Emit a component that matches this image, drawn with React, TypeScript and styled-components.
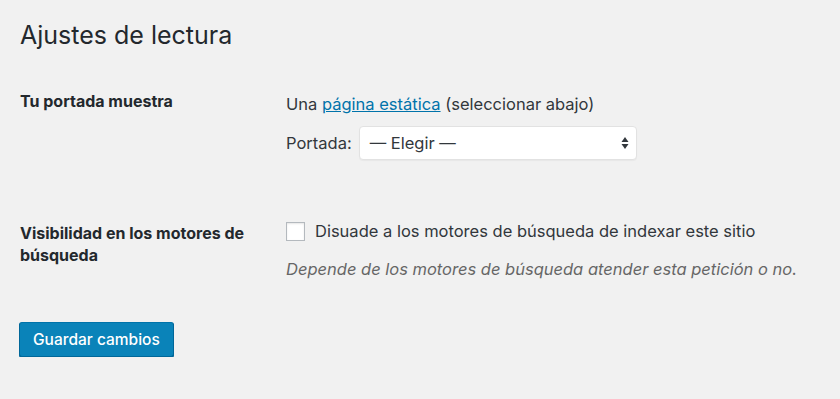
import React from 'react';
import styled, {createGlobalStyle} from 'styled-components';

const GlobalStyle = createGlobalStyle`
    html, body {
        margin: 0;
        padding: 0;
        background: #f1f1f1;
    }
    body {
        font-family: Inter, "Noto Sans", "Liberation Sans", sans-serif;
        color: #23282d;
    }
`;

const Wrap = styled.div`
    padding: 19px 20px 0 20px;
`;

const Title = styled.h1`
    margin: 0 0 39px 0;
    font-size: 25px;
    font-weight: 400;
    line-height: 32px;
    color: #23282d;
`;

const Form = styled.div`
    display: grid;
    grid-template-columns: 266px 1fr;
`;

const Label = styled.div<{$top?: number}>`
    font-size: 16px;
    font-weight: 700;
    line-height: 22px;
    padding-top: ${({$top}) => $top ?? 0}px;
    padding-right: 20px;
`;

const Field = styled.div<{$top: number; $bottom: number}>`
    font-size: 16.5px;
    line-height: 22px;
    color: #32373c;
    padding-top: ${({$top}) => $top}px;
    padding-bottom: ${({$bottom}) => $bottom}px;
`;

const Line = styled.div<{$top?: number}>`
    display: flex;
    align-items: center;
    gap: 7px;
    margin-top: ${({$top}) => $top ?? 0}px;
`;

const Link = styled.a`
    color: #0073aa;
    text-decoration: underline;
`;

const Select = styled.div`
    position: relative;
    width: 278px;
    height: 34px;
    box-sizing: border-box;
    padding: 0 10px;
    display: flex;
    align-items: center;
    background: #fff;
    border: 1px solid #e2e2e2;
    border-radius: 4px;
    box-shadow: 0 1px 1px rgba(0, 0, 0, 0.04);
    color: #32373c;
`;

const Arrows = styled.svg`
    position: absolute;
    right: 7px;
    top: 9px;
`;

const Checkbox = styled.span`
    display: inline-block;
    width: 19px;
    height: 19px;
    box-sizing: border-box;
    border: 1px solid #b4b9be;
    background: #fff;
    box-shadow: inset 0 1px 2px rgba(0, 0, 0, 0.1);
    margin-right: 3px;
`;

const Hint = styled.p`
    margin: 16px 0 0 0;
    font-style: italic;
    color: #666;
`;

const Button = styled.button`
    margin-top: 42px;
    margin-left: -1px;
    height: 35px;
    padding: 0 13px;
    font-family: inherit;
    font-size: 15.5px;
    font-weight: 500;
    color: #fff;
    background: #0a83b9;
    border: 1px solid #0073aa;
    border-color: #0073aa #006799 #006799;
    border-radius: 3px;
    box-shadow: 0 1px 0 #006799;
    cursor: pointer;
`;

export default function App() {
    return (
        <>
            <GlobalStyle />
            <Wrap>
                <Title>Ajustes de lectura</Title>
                <Form>
                    <Label>Tu portada muestra</Label>
                    <Field $top={3} $bottom={60}>
                        <div>
                            Una <Link href="#">página estática</Link> (seleccionar abajo)
                        </div>
                        <Line $top={11}>
                            <span>Portada:</span>
                            <Select>
                                — Elegir —
                                <Arrows width="8" height="14" viewBox="0 0 8 14">
                                    <path d="M4 1 L7.5 6 L0.5 6 Z" fill="#32373c" />
                                    <path d="M4 13 L7.5 8 L0.5 8 Z" fill="#32373c" />
                                </Arrows>
                            </Select>
                        </Line>
                    </Field>
                    <Label $top={2}>Visibilidad en los motores de búsqueda</Label>
                    <Field $top={0} $bottom={0}>
                        <Line>
                            <Checkbox />
                            Disuade a los motores de búsqueda de indexar este sitio
                        </Line>
                        <Hint>Depende de los motores de búsqueda atender esta petición o no.</Hint>
                    </Field>
                </Form>
                <Button>Guardar cambios</Button>
            </Wrap>
        </>
    );
}
